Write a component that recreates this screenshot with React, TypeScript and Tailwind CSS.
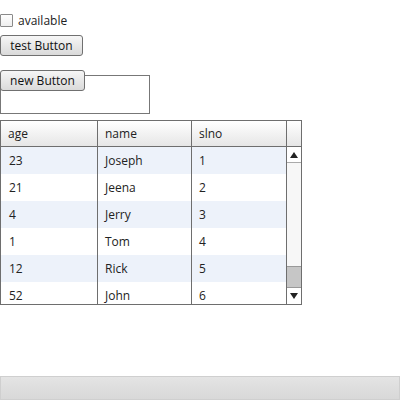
const rows = [
  { age: "23", name: "Joseph", slno: "1" },
  { age: "21", name: "Jeena", slno: "2" },
  { age: "4", name: "Jerry", slno: "3" },
  { age: "1", name: "Tom", slno: "4" },
  { age: "12", name: "Rick", slno: "5" },
  { age: "52", name: "John", slno: "6" },
];

const btn =
  "h-[21px] rounded-[3px] border border-[#707070] bg-gradient-to-b from-[#f6f6f6] to-[#dadada] text-[12px] leading-none text-[#111]";

export default function App() {
  return (
    <div className="relative flex h-[400px] w-[400px] flex-col bg-white font-['Open_Sans',sans-serif] text-[12px] text-[#222]">
      <label className="mt-[13px] flex h-[14px] items-center">
        <span className="h-[13px] w-[13px] rounded-[1px] border border-[#8a8a8a] bg-gradient-to-b from-white to-[#eeeeee]" />
        <span className="ml-[5px] pt-[1px]">available</span>
      </label>

      <button type="button" className={`${btn} mt-[8px] w-[83px]`}>
        test Button
      </button>

      <div className="relative mt-[14px] h-[44px] w-[150px]">
        <div className="absolute left-0 top-[5px] h-[39px] w-[150px] border border-[#777]" />
        <button type="button" className={`${btn} absolute left-0 top-0 w-[85px]`}>
          new Button
        </button>
      </div>

      <div className="mt-[6px] w-[302px] border border-[#6e6e6e]">
        <div className="flex h-[26px] border-b border-[#6e6e6e] bg-gradient-to-b from-white to-[#e6e6e6]">
          <div className="flex w-[97px] items-center border-r border-[#6e6e6e] pl-[7px]">age</div>
          <div className="flex w-[94px] items-center border-r border-[#6e6e6e] pl-[7px]">name</div>
          <div className="flex w-[95px] items-center border-r border-[#6e6e6e] pl-[7px]">slno</div>
          <div className="flex-1" />
        </div>
        <div className="flex h-[157px] overflow-hidden">
          <div className="w-[286px]">
            {rows.map((r, i) => (
              <div
                key={r.slno}
                className={`flex h-[27px] ${i % 2 === 0 ? "bg-[#edf2fa]" : "bg-white"}`}
              >
                <div className="flex w-[97px] items-center border-r border-[#6e6e6e] pl-[8px]">{r.age}</div>
                <div className="flex w-[94px] items-center border-r border-[#6e6e6e] pl-[7px]">{r.name}</div>
                <div className="flex w-[95px] items-center border-r border-[#6e6e6e] pl-[7px]">{r.slno}</div>
              </div>
            ))}
          </div>
          <div className="flex flex-1 flex-col bg-[#f7f7f7]">
            <div className="flex h-[16px] items-center justify-center border-b border-[#aaa] bg-white">
              <svg width="8" height="6" viewBox="0 0 8 6">
                <path d="M4 0 L8 6 L0 6 Z" fill="#222" />
              </svg>
            </div>
            <div className="flex-1" />
            <div className="h-[22px] border-y border-[#999] bg-[#c6c6c6]" />
            <div className="flex h-[16px] items-center justify-center bg-white">
              <svg width="8" height="6" viewBox="0 0 8 6">
                <path d="M0 0 L8 0 L4 6 Z" fill="#222" />
              </svg>
            </div>
          </div>
        </div>
      </div>

      <div className="absolute bottom-0 left-0 h-[24px] w-[400px] border border-[#cfcfcf] bg-gradient-to-b from-[#e4e4e4] to-[#d8d8d8]" />
    </div>
  );
}
